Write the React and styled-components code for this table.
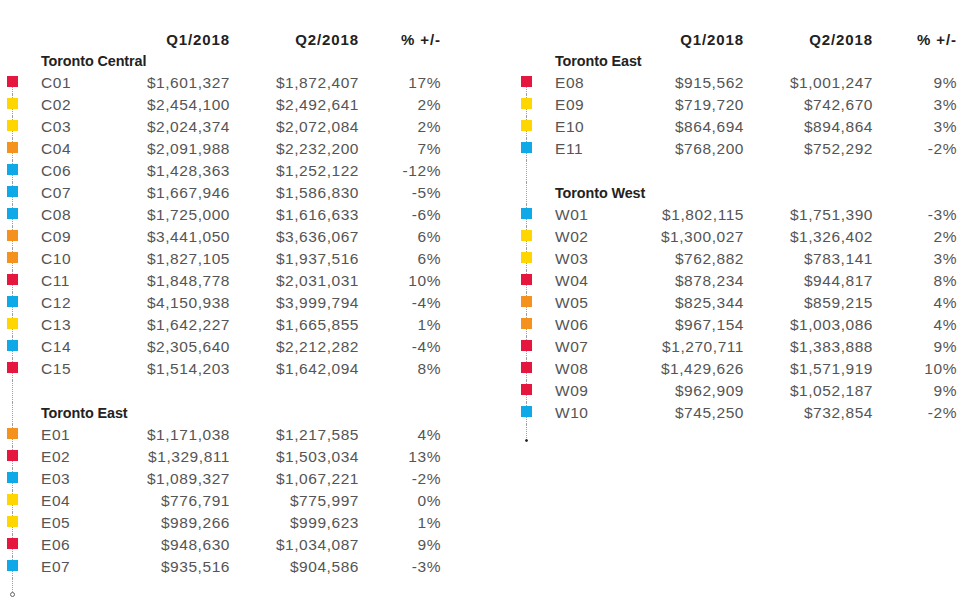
import React from 'react';
import styled, { createGlobalStyle } from 'styled-components';

const COLORS = {
  red: '#e5173f',
  yellow: '#ffd600',
  orange: '#f5921e',
  blue: '#0fa9e8',
};

const GlobalStyle = createGlobalStyle`
  body {
    margin: 0;
    background: #fff;
    font-family: 'Liberation Sans', Arial, sans-serif;
  }
`;

const Page = styled.div`
  width: 972px;
  height: 600px;
  display: flex;
  gap: 80px;
  padding: 28px 0 0 7px;
  box-sizing: border-box;
  overflow: hidden;
`;

const Panel = styled.div`
  display: grid;
  grid-template-columns: 34px 80px 109px 129px ${(p) => p.$last}px;
  grid-auto-rows: 22px;
  align-items: center;
`;

const HeadCell = styled.div`
  font-size: 15px;
  font-weight: bold;
  color: #222;
  text-align: right;
  letter-spacing: 0.9px;
`;

const Title = styled.div`
  grid-column: 2 / span 4;
  font-size: 14.4px;
  font-weight: bold;
  color: #222;
  letter-spacing: -0.1px;
  white-space: nowrap;
`;

const Spacer = styled.div`
  grid-column: 2 / span 4;
`;

const Rail = styled.div`
  position: relative;
  height: 100%;
  &::before {
    content: '';
    position: absolute;
    left: 5px;
    top: ${(p) => (p.$from === 'mid' ? '50%' : '0')};
    bottom: ${(p) => (p.$to === 'cap' ? '6px' : '0')};
    border-left: 1px dotted #9aa0a8;
    display: ${(p) => (p.$none ? 'none' : 'block')};
  }
`;

const Square = styled.span`
  position: absolute;
  left: 0;
  top: 4px;
  width: 11px;
  height: 11px;
  background: ${(p) => COLORS[p.$color]};
`;

const Cap = styled.span`
  position: absolute;
  left: ${(p) => (p.$open ? '3px' : '4px')};
  bottom: ${(p) => (p.$open ? '3px' : '4px')};
  width: ${(p) => (p.$open ? '5px' : '3px')};
  height: ${(p) => (p.$open ? '5px' : '3px')};
  border-radius: 50%;
  box-sizing: border-box;
  border: 1px solid ${(p) => (p.$open ? '#666' : '#222')};
  background: ${(p) => (p.$open ? '#fff' : '#222')};
`;

const Cell = styled.div`
  font-size: 15.5px;
  color: #555;
  letter-spacing: 0.55px;
  text-align: ${(p) => (p.$left ? 'left' : 'right')};
  white-space: nowrap;
`;

const left = [
  {
    title: 'Toronto Central',
    rows: [
      ['C01', '$1,601,327', '$1,872,407', '17%', 'red'],
      ['C02', '$2,454,100', '$2,492,641', '2%', 'yellow'],
      ['C03', '$2,024,374', '$2,072,084', '2%', 'yellow'],
      ['C04', '$2,091,988', '$2,232,200', '7%', 'orange'],
      ['C06', '$1,428,363', '$1,252,122', '-12%', 'blue'],
      ['C07', '$1,667,946', '$1,586,830', '-5%', 'blue'],
      ['C08', '$1,725,000', '$1,616,633', '-6%', 'blue'],
      ['C09', '$3,441,050', '$3,636,067', '6%', 'orange'],
      ['C10', '$1,827,105', '$1,937,516', '6%', 'orange'],
      ['C11', '$1,848,778', '$2,031,031', '10%', 'red'],
      ['C12', '$4,150,938', '$3,999,794', '-4%', 'blue'],
      ['C13', '$1,642,227', '$1,665,855', '1%', 'yellow'],
      ['C14', '$2,305,640', '$2,212,282', '-4%', 'blue'],
      ['C15', '$1,514,203', '$1,642,094', '8%', 'red'],
    ],
  },
  {
    title: 'Toronto East',
    rows: [
      ['E01', '$1,171,038', '$1,217,585', '4%', 'orange'],
      ['E02', '$1,329,811', '$1,503,034', '13%', 'red'],
      ['E03', '$1,089,327', '$1,067,221', '-2%', 'blue'],
      ['E04', '$776,791', '$775,997', '0%', 'yellow'],
      ['E05', '$989,266', '$999,623', '1%', 'yellow'],
      ['E06', '$948,630', '$1,034,087', '9%', 'red'],
      ['E07', '$935,516', '$904,586', '-3%', 'blue'],
    ],
  },
];

const right = [
  {
    title: 'Toronto East',
    rows: [
      ['E08', '$915,562', '$1,001,247', '9%', 'red'],
      ['E09', '$719,720', '$742,670', '3%', 'yellow'],
      ['E10', '$864,694', '$894,864', '3%', 'yellow'],
      ['E11', '$768,200', '$752,292', '-2%', 'blue'],
    ],
  },
  {
    title: 'Toronto West',
    rows: [
      ['W01', '$1,802,115', '$1,751,390', '-3%', 'blue'],
      ['W02', '$1,300,027', '$1,326,402', '2%', 'yellow'],
      ['W03', '$762,882', '$783,141', '3%', 'yellow'],
      ['W04', '$878,234', '$944,817', '8%', 'red'],
      ['W05', '$825,344', '$859,215', '4%', 'orange'],
      ['W06', '$967,154', '$1,003,086', '4%', 'orange'],
      ['W07', '$1,270,711', '$1,383,888', '9%', 'red'],
      ['W08', '$1,429,626', '$1,571,919', '10%', 'red'],
      ['W09', '$962,909', '$1,052,187', '9%', 'red'],
      ['W10', '$745,250', '$732,854', '-2%', 'blue'],
    ],
  },
];

const Table = ({ sections, last, openCap }) => (
  <Panel $last={last}>
    <div />
    <div />
    <HeadCell>Q1/2018</HeadCell>
    <HeadCell>Q2/2018</HeadCell>
    <HeadCell>% +/-</HeadCell>
    {sections.map((s, si) => (
      <React.Fragment key={s.title + si}>
        {si > 0 && (
          <>
            <Rail />
            <Spacer />
            <Rail />
          </>
        )}
        {si === 0 && <Rail $none />}
        <Title>{s.title}</Title>
        {s.rows.map((r, ri) => (
          <React.Fragment key={r[0]}>
            <Rail $from={si === 0 && ri === 0 ? 'mid' : 'top'}>
              <Square $color={r[4]} />
            </Rail>
            <Cell $left>{r[0]}</Cell>
            <Cell>{r[1]}</Cell>
            <Cell>{r[2]}</Cell>
            <Cell>{r[3]}</Cell>
          </React.Fragment>
        ))}
      </React.Fragment>
    ))}
    <Rail $to="cap">
      <Cap $open={openCap} />
    </Rail>
  </Panel>
);

export default function App() {
  return (
    <>
      <GlobalStyle />
      <Page>
        <Table sections={left} last={82} openCap />
        <Table sections={right} last={84} />
      </Page>
    </>
  );
}
